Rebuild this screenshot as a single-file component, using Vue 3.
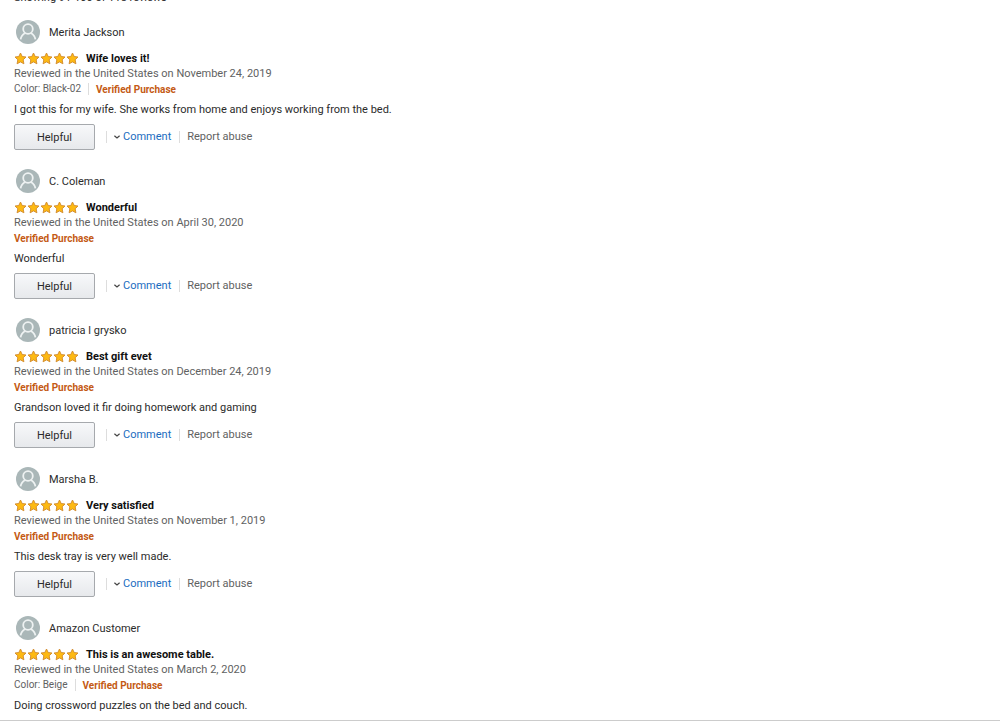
<script setup>
const place = 'Reviewed in the United States on '
const reviews = [
  { name: 'Merita Jackson', title: 'Wife loves it!', date: 'November 24, 2019', color: 'Black-02', body: 'I got this for my wife. She works from home and enjoys working from the bed.', actions: true },
  { name: 'C. Coleman', title: 'Wonderful', date: 'April 30, 2020', body: 'Wonderful', actions: true },
  { name: 'patricia l grysko', title: 'Best gift evet', date: 'December 24, 2019', body: 'Grandson loved it fir doing homework and gaming', actions: true },
  { name: 'Marsha B.', title: 'Very satisfied', date: 'November 1, 2019', body: 'This desk tray is very well made.', actions: true },
  { name: 'Amazon Customer', title: 'This is an awesome table.', date: 'March 2, 2020', color: 'Beige', body: 'Doing crossword puzzles on the bed and couch.', actions: false },
]
</script>

<template>
  <main class="page">
    <p class="count">Showing 91-100 of 118 reviews</p>
    <article v-for="r in reviews" :key="r.name" class="review">
      <div class="author">
        <svg class="avatar" viewBox="0 0 24 24" aria-hidden="true">
          <circle cx="12" cy="12" r="12" fill="#aab7b8" />
          <circle cx="12" cy="9" r="4.8" fill="none" stroke="#eef2f2" stroke-width="1.8" />
          <path d="M4.6 19.4C5 16 7 14.2 9.4 13M19.4 19.4C19 16 17 14.2 14.6 13" fill="none" stroke="#eef2f2" stroke-width="1.8" />
        </svg>
        <span>{{ r.name }}</span>
      </div>
      <div class="headline">
        <svg class="stars" viewBox="0 0 65 13" role="img" aria-label="5 out of 5 stars">
          <path
            v-for="n in 5"
            :key="n"
            :transform="`translate(${(n - 1) * 13} 0)`"
            d="M6.5 1L8.2 4.5L12 5L9.2 7.8L9.9 11.8L6.5 9.9L3.1 11.8L3.8 7.8L1 5L4.8 4.5Z"
            fill="#fdb913"
            stroke="#d0892c"
            stroke-width="0.9"
            stroke-linejoin="round"
          />
        </svg>
        <h2 class="title">{{ r.title }}</h2>
      </div>
      <p class="date">{{ place }}{{ r.date }}</p>
      <div class="meta">
        <span v-if="r.color" class="variant">Color: {{ r.color }}</span>
        <span class="verified">Verified Purchase</span>
      </div>
      <p class="body">{{ r.body }}</p>
      <div v-if="r.actions" class="actions">
        <button type="button" class="helpful">Helpful</button>
        <a href="#" class="comment">
          <svg class="chevron" viewBox="0 0 6 4" aria-hidden="true">
            <path d="M0.4 0.7L3 3L5.6 0.7" fill="none" stroke="#444" stroke-width="1.2" />
          </svg>
          Comment
        </a>
        <a href="#" class="report">Report abuse</a>
      </div>
    </article>
  </main>
</template>

<style>
body {
  margin: 0;
  background: #fff;
}
</style>

<style scoped>
.page {
  overflow: hidden;
  border-bottom: 1px solid #ccc;
  font-family: Roboto, "Noto Sans", sans-serif;
  font-size: 11px;
  line-height: 15px;
  color: #2b2b2b;
}
p,
h2 {
  margin: 0;
}
.count {
  margin: -10px 14px 15px;
}
.review {
  padding: 0 14px;
  margin-bottom: 19px;
}
.review:last-child {
  margin-bottom: 6px;
}
.author {
  display: flex;
  align-items: center;
  gap: 9px;
  padding-left: 2px;
  margin-bottom: 7px;
}
.avatar {
  width: 24px;
  height: 24px;
}
.headline {
  display: flex;
  align-items: center;
  gap: 7px;
}
.stars {
  width: 65px;
  height: 13px;
}
.title {
  font-size: 11px;
  font-weight: 700;
  color: #111;
}
.date {
  color: #5f6262;
}
.meta {
  display: flex;
  align-items: center;
  height: 16px;
  margin-bottom: 5px;
  font-size: 10px;
}
.variant {
  padding-right: 7px;
  margin-right: 7px;
  border-right: 1px solid #ddd;
  line-height: 12px;
  color: #5f6262;
}
.verified {
  font-weight: 700;
  color: #c45a14;
}
.body {
  line-height: 16px;
}
.actions {
  display: flex;
  align-items: center;
  margin-top: 6px;
}
.helpful {
  width: 81px;
  height: 26px;
  padding: 0;
  border: 1px solid #a6a9ad;
  border-radius: 2px;
  background: linear-gradient(#f7f8fa, #e7e9ec);
  font: inherit;
  color: #2b2b2b;
}
.comment,
.report {
  line-height: 12px;
  border-left: 1px solid #ddd;
  padding-left: 7px;
  text-decoration: none;
}
.comment {
  display: flex;
  align-items: center;
  gap: 3px;
  margin-left: 11px;
  color: #1a6cbf;
}
.chevron {
  width: 6px;
  height: 4px;
}
.report {
  margin-left: 8px;
  color: #5f6262;
}
</style>
